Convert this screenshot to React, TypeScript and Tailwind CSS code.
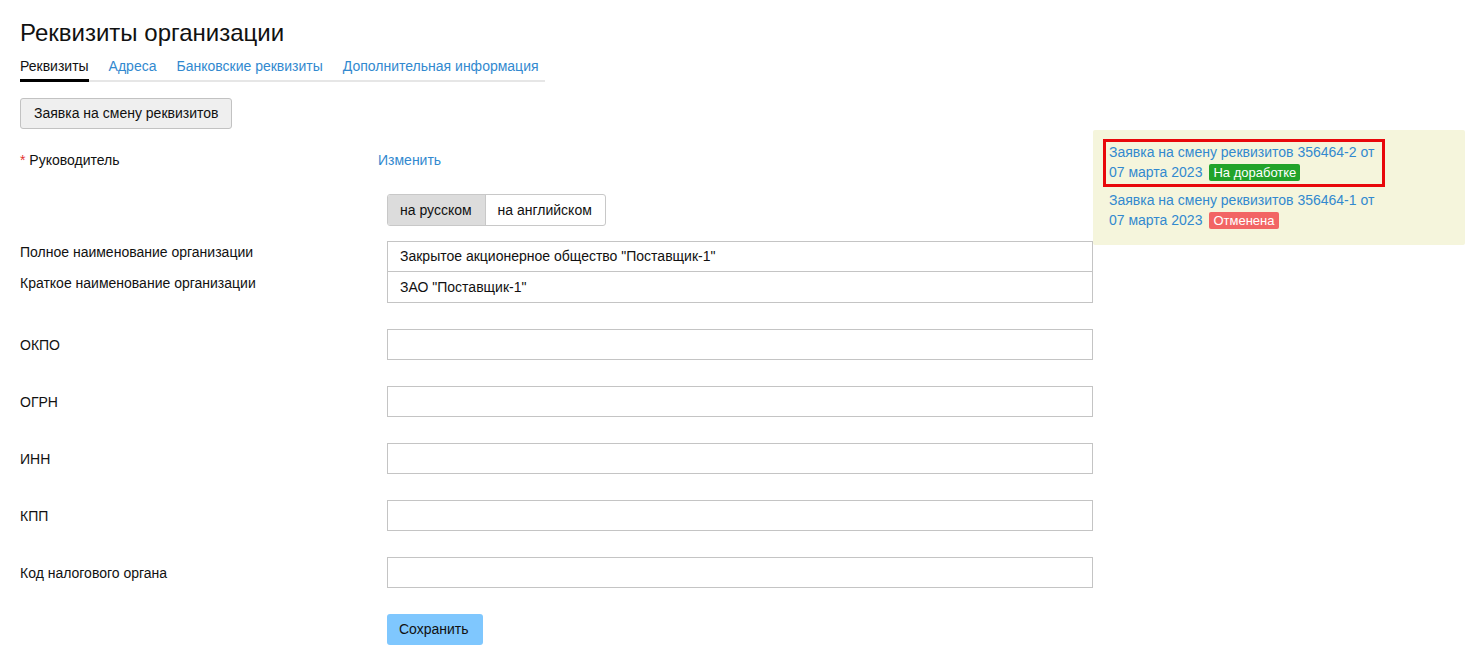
import React from "react";

const tabs = ["Реквизиты", "Адреса", "Банковские реквизиты", "Дополнительная информация"];
const codes = ["ОКПО", "ОГРН", "ИНН", "КПП", "Код налогового органа"];

function Field({ label }: { label: string }) {
  return (
    <div className="flex items-center mt-[26px]">
      <div className="w-[367px] pt-[1px]">{label}</div>
      <input className="w-[706px] h-[31px] border border-[#c4c4c4] px-3 outline-none" />
    </div>
  );
}

function Request({ num, status, tone, active }: { num: string; status: string; tone: string; active?: boolean }) {
  return (
    <div className={`w-[282px] border-[3px] px-[3px] pb-[2px] ${active ? "border-[#e8070b]" : "border-transparent"}`}>
      <div className="whitespace-nowrap leading-5 text-[#3289cf]">Заявка на смену реквизитов {num} от</div>
      <div className="whitespace-nowrap leading-5 text-[#3289cf] flex items-center">
        07 марта 2023
        <span className={`ml-[7px] px-[4px] text-[13px] leading-[17px] text-white rounded-[2px] ${tone}`}>{status}</span>
      </div>
    </div>
  );
}

export default function App() {
  return (
    <div className="flex text-[14px] text-[#111] bg-white min-h-[660px]" style={{ fontFamily: '"Liberation Sans", Arial, sans-serif' }}>
      <div className="pl-5 w-[1093px]">
        <h1 className="text-[24px] leading-[30px] mt-[18px]">Реквизиты организации</h1>
        <div className="inline-flex gap-5 mt-2 border-b-2 border-[#e6e6e6] pr-[6px]">
          {tabs.map((t, i) => (
            <div
              key={t}
              className={`leading-5 pb-1 ${i === 0 ? "border-b-[3px] border-black -mb-[2px] pb-[3px]" : "text-[#3289cf]"}`}
            >
              {t}
            </div>
          ))}
        </div>
        <div className="mt-4">
          <button className="h-[31px] px-[13px] bg-[#efefef] border border-[#c2c2c2] rounded-[3px]">Заявка на смену реквизитов</button>
        </div>
        <div className="flex mt-[21px] leading-5">
          <div className="w-[358px]">
            <span className="text-[#e3342f]">*</span> Руководитель
          </div>
          <span className="text-[#3289cf]">Изменить</span>
        </div>
        <div className="flex mt-6 ml-[367px]">
          <div className="flex h-[32px] border border-[#c8c8c8] rounded-[3px] overflow-hidden">
            <div className="pl-3 pr-[13px] flex items-center bg-[#dcdcdc] border-r border-[#c8c8c8]">на русском</div>
            <div className="pl-3 pr-[13px] flex items-center">на английском</div>
          </div>
        </div>
        <div className="flex mt-[15px]">
          <div className="w-[367px]">
            <div className="h-[32px] pt-[1px] leading-5">Полное наименование организации</div>
            <div className="leading-5">Краткое наименование организации</div>
          </div>
          <div className="w-[706px] border border-[#c4c4c4]">
            <div className="h-[30px] px-3 flex items-center border-b border-[#c4c4c4]">Закрытое акционерное общество "Поставщик-1"</div>
            <div className="h-[30px] px-3 flex items-center">ЗАО "Поставщик-1"</div>
          </div>
        </div>
        {codes.map((c) => (
          <Field key={c} label={c} />
        ))}
        <div className="mt-[26px] ml-[367px]">
          <button className="h-[31px] pl-3 pr-[14px] bg-[#7fc7fe] rounded-[3px]">Сохранить</button>
        </div>
      </div>
      <div className="w-[372px] h-[115px] mt-[130px] bg-[#f5f5dc] rounded-[2px] pl-[10px] pt-[9px]">
        <Request num="356464-2" status="На доработке" tone="bg-[#22a32a]" active />
        <Request num="356464-1" status="Отменена" tone="bg-[#f26564]" />
      </div>
    </div>
  );
}
